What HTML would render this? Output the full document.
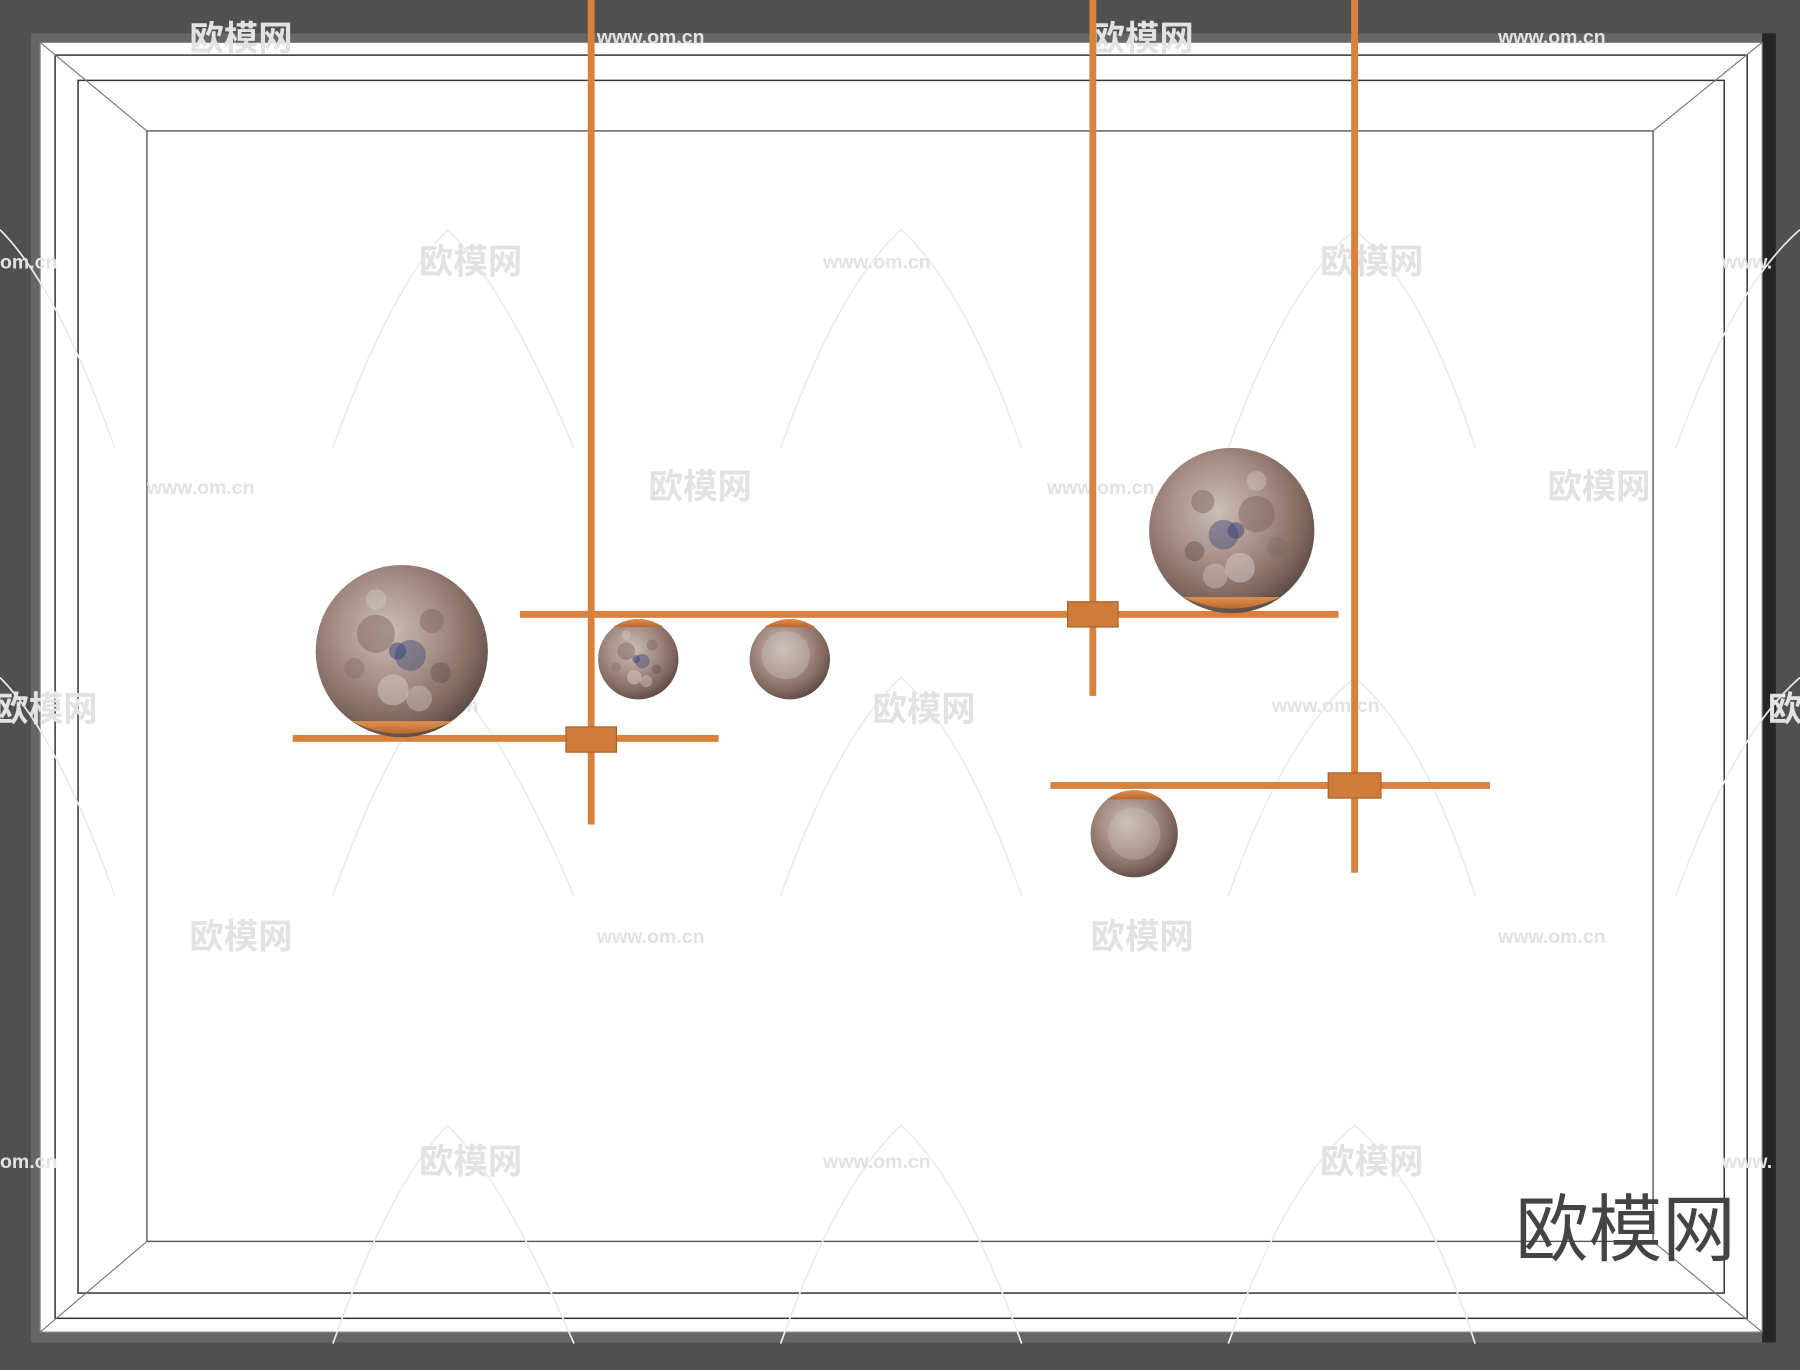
<!DOCTYPE html>
<html><head><meta charset="utf-8"><style>
html,body{margin:0;padding:0;background:#505050;}
svg{display:block}
</style></head><body>
<svg width="1800" height="1370" viewBox="0 0 1568 1193" preserveAspectRatio="none" xmlns="http://www.w3.org/2000/svg">
<defs>
<radialGradient id="moon" cx="0.42" cy="0.38" r="0.65">
<stop offset="0" stop-color="#cabeb8"/>
<stop offset="0.45" stop-color="#a89088"/>
<stop offset="0.8" stop-color="#80685e"/>
<stop offset="1" stop-color="#5a4a44"/>
</radialGradient>
<linearGradient id="cup" x1="0" y1="0" x2="0" y2="1">
<stop offset="0" stop-color="#e0904e"/><stop offset="1" stop-color="#b8682e"/>
</linearGradient>
<g id="spots">
<circle cx="-0.3" cy="-0.2" r="0.22" fill="#7a6055" opacity="0.45"/>
<circle cx="0.1" cy="0.05" r="0.18" fill="#3e4a78" opacity="0.45"/>
<circle cx="-0.05" cy="0.0" r="0.1" fill="#34407a" opacity="0.5"/>
<circle cx="0.35" cy="-0.35" r="0.14" fill="#7a6258" opacity="0.45"/>
<circle cx="-0.1" cy="0.45" r="0.18" fill="#ddd5d0" opacity="0.45"/>
<circle cx="0.45" cy="0.25" r="0.12" fill="#5a4a48" opacity="0.4"/>
<circle cx="-0.55" cy="0.2" r="0.12" fill="#806860" opacity="0.4"/>
<circle cx="0.2" cy="0.55" r="0.15" fill="#d8cec8" opacity="0.4"/>
<circle cx="-0.3" cy="-0.6" r="0.12" fill="#d8d0cc" opacity="0.4"/>
</g>
</defs>
<rect width="1568" height="1193" fill="#505050"/>
<rect x="27" y="29" width="1520" height="1140" fill="#666"/>
<rect x="1535" y="29" width="12" height="1140" fill="#262626"/>
<rect x="35" y="37" width="1500" height="1123" fill="#fff" stroke="#888" stroke-width="1"/>
<rect x="48" y="48" width="1474" height="1100" fill="none" stroke="#333" stroke-width="1.3"/>
<rect x="68" y="70" width="1434" height="1056" fill="none" stroke="#333" stroke-width="1.3"/>
<rect x="128" y="114" width="1312" height="967" fill="none" stroke="#555" stroke-width="1.2"/>
<g stroke="#777" stroke-width="1">
<line x1="35" y1="37" x2="128" y2="114"/><line x1="1535" y1="37" x2="1440" y2="114"/>
<line x1="35" y1="1160" x2="128" y2="1081"/><line x1="1535" y1="1160" x2="1440" y2="1081"/>
</g>
<g fill="none" stroke="#ececec" stroke-width="1.5">
<path d="M290 390 Q340 250 390 200 Q440 250 500 390"/>
<path d="M680 390 Q730 250 785 200 Q840 250 890 390"/>
<path d="M1070 390 Q1120 250 1180 200 Q1240 250 1285 390"/>
<path d="M290 780 Q340 640 390 590 Q440 640 500 780"/>
<path d="M680 780 Q730 640 785 590 Q840 640 890 780"/>
<path d="M1070 780 Q1120 640 1180 590 Q1240 640 1285 780"/>
<path d="M290 1170 Q340 1030 390 980 Q440 1030 500 1170"/>
<path d="M680 1170 Q730 1030 785 980 Q840 1030 890 1170"/>
<path d="M1070 1170 Q1120 1030 1180 980 Q1240 1030 1285 1170"/>
<path d="M100 390 Q50 250 0 200"/><path d="M1460 390 Q1510 250 1568 200"/>
<path d="M100 780 Q50 640 0 590"/><path d="M1460 780 Q1510 640 1568 590"/>
</g>
<g font-family="'Liberation Sans','Noto Sans CJK SC',sans-serif" fill="#e2e2e2" font-weight="bold">
<g font-size="30">
<text x="165" y="44">欧模网</text><text x="950" y="44">欧模网</text>
<text x="365" y="238">欧模网</text><text x="1150" y="238">欧模网</text>
<text x="565" y="434">欧模网</text><text x="1348" y="434">欧模网</text>
<text x="-5" y="628">欧模网</text><text x="760" y="628">欧模网</text><text x="1540" y="628">欧模网</text>
<text x="165" y="826">欧模网</text><text x="950" y="826">欧模网</text>
<text x="365" y="1022">欧模网</text><text x="1150" y="1022">欧模网</text>
</g>
<g font-size="17">
<text x="520" y="38">www.om.cn</text><text x="1305" y="38">www.om.cn</text>
<text x="0" y="234">om.cn</text><text x="717" y="234">www.om.cn</text><text x="1500" y="234">www.</text>
<text x="128" y="430">www.om.cn</text><text x="912" y="430">www.om.cn</text>
<text x="323" y="620">www.om.cn</text><text x="1108" y="620">www.om.cn</text>
<text x="520" y="821">www.om.cn</text><text x="1305" y="821">www.om.cn</text>
<text x="0" y="1017">om.cn</text><text x="717" y="1017">www.om.cn</text><text x="1500" y="1017">www.</text>
</g>
</g>
<g fill="#d9823f">
<rect x="512" y="0" width="6" height="718"/>
<rect x="949" y="0" width="6" height="606"/>
<rect x="1177" y="0" width="6" height="760"/>
<rect x="453" y="532" width="713" height="6"/>
<rect x="255" y="640" width="371" height="6"/>
<rect x="915" y="681" width="383" height="6"/>
</g>
<g fill="#cf7c3a" stroke="#a8602a" stroke-width="1">
<rect x="493" y="633" width="44" height="22"/>
<rect x="930" y="524" width="44" height="22"/>
<rect x="1157" y="673" width="46" height="22"/>
</g>
<g>
<g transform="translate(350,567) scale(75)"><circle r="1" fill="url(#moon)"/><use href="#spots"/></g>
<path d="M306 628 Q350 650 394 628 Z" fill="url(#cup)"/>
<g transform="translate(556,574) scale(35)"><circle r="1" fill="url(#moon)"/><use href="#spots"/></g>
<path d="M534 546 Q556 532 578 546 Z" fill="url(#cup)"/>
<g transform="translate(688,574) scale(35)"><circle r="1" fill="url(#moon)"/><circle cx="-0.1" cy="-0.1" r="0.6" fill="#d0c6c2" opacity="0.35"/></g>
<path d="M666 546 Q688 532 710 546 Z" fill="url(#cup)"/>
<g transform="translate(1073,462) scale(72)"><circle r="1" fill="url(#moon)"/><use href="#spots" transform="scale(-1,1)"/></g>
<path d="M1031 520 Q1073 540 1115 520 Z" fill="url(#cup)"/>
<g transform="translate(988,726) scale(38)"><circle r="1" fill="url(#moon)"/><circle cx="0" cy="0" r="0.6" fill="#d0c6c2" opacity="0.3"/></g>
<path d="M964 696 Q988 680 1012 696 Z" fill="url(#cup)"/>
</g>
<text x="1320" y="1093" font-family="'Liberation Sans','Noto Sans CJK SC',sans-serif" font-size="64" fill="#444">欧模网</text>
</svg>
</body></html>
